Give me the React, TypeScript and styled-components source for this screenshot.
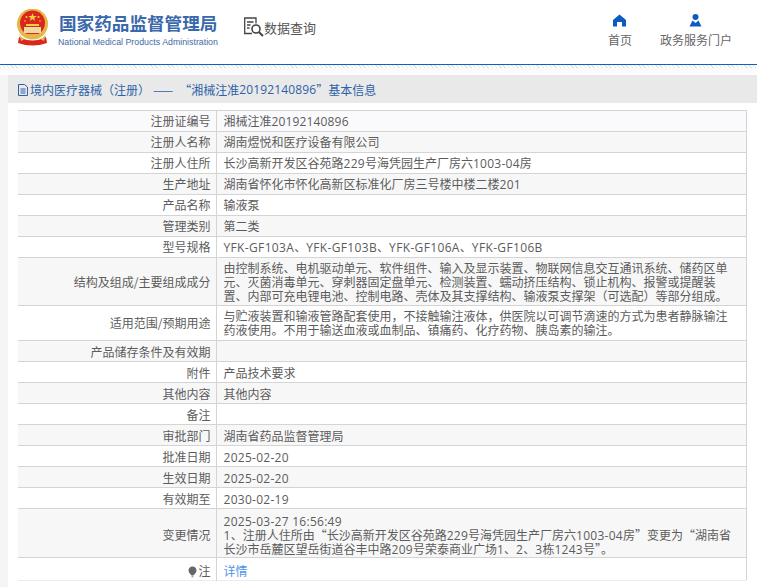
import { FC, ReactNode } from "react";
import styled, { createGlobalStyle } from "styled-components";

const GlobalStyle = createGlobalStyle`
  html, body {
    margin: 0;
    padding: 0;
    background: #f5f5f5;
    font-family: "Noto Sans CJK SC", sans-serif;
    font-size: 12px;
    color: #5c5c5c;
    overflow: hidden;
  }
`;

const Page = styled.div`
  width: 757px;
  height: 587px;
  overflow: hidden;
`;

const Header = styled.header`
  height: 64px;
  background: #fff;
  border-bottom: 1px solid #0a62c4;
  display: flex;
  align-items: flex-start;
`;

const Brand = styled.div`
  display: flex;
  align-items: flex-start;
  padding: 9px 0 0 16px;
`;

const BrandText = styled.div`
  margin-left: 10px;
  display: flex;
  flex-direction: column;
`;

const BrandName = styled.div`
  font-size: 17.6px;
  line-height: 22px;
  margin-top: 3px;
  font-weight: 700;
  color: #3a68ac;
  white-space: nowrap;
`;

const BrandEnglish = styled.div`
  font-family: "Liberation Sans", sans-serif;
  font-size: 8.8px;
  line-height: 11px;
  margin: 3px 0 0 -1px;
  color: #3f6aa8;
  white-space: nowrap;
`;

const Query = styled.div`
  display: flex;
  align-items: center;
  margin: 17px 0 0 26px;
  font-size: 13px;
  line-height: 20px;
  color: #555;
  white-space: nowrap;
`;

const Nav = styled.nav`
  margin-left: auto;
  display: flex;
  padding: 14px 25px 0 0;
  gap: 28px;
`;

const NavItem = styled.a`
  display: flex;
  flex-direction: column;
  align-items: center;
  color: #666;
  font-size: 12px;
  line-height: 16px;
  gap: 5px;
`;

const Stripe = styled.div`
  height: 10px;
  background:
    repeating-linear-gradient(45deg, #e4e4e4 0 1px, #fff 1px 3px) top / 100% 3px no-repeat,
    linear-gradient(#f6f6f6, #fff);
`;

const Panel = styled.main`
  margin-left: 8px;
  background: #fff;
  height: 600px;
`;

const PanelTitle = styled.h2`
  margin: 0;
  height: 28px;
  background: #e9e9e9;
  display: flex;
  align-items: center;
  padding: 1px 0 0 10px;
  box-sizing: border-box;
  font-size: 12px;
  font-weight: 400;
  color: #2d62a8;
  white-space: nowrap;
`;

const Dash = styled.span`
  margin: 0 5px 0 3px;
  letter-spacing: 1px;
`;

const TableWrap = styled.div`
  padding: 7px 10px 0 10px;
`;

const Table = styled.table`
  width: 729px;
  border-collapse: collapse;
  table-layout: fixed;
  border-top: 1px solid #d4d4d4;
  border-right: 1px solid #d4d4d4;
`;

const Row = styled.tr<{ $tone: string; $pad: number }>`
  background: ${(p) => p.$tone};
  border-bottom: 1px solid #d4d4d4;

  td {
    padding-top: ${(p) => p.$pad}px;
  }

  &:last-child {
    border-bottom-color: #ececec;
  }
`;

const Label = styled.td`
  padding: 0 5px 0 0;
  text-align: right;
  border-right: 1px solid #d4d4d4;
  line-height: 18px;
  white-space: nowrap;
`;

const Value = styled.td`
  padding: 0 8px 0 7px;
  line-height: 14px;
`;

const Latin = styled.span<{ $spacing: number }>`
  font-family: "Open Sans", sans-serif;
  letter-spacing: ${(p) => p.$spacing}px;
  line-height: 1;
`;

const DetailLink = styled.a`
  color: #4f93e8;
`;

const Bulb = styled.svg`
  vertical-align: -2px;
  margin-right: 1px;
`;

// latin runs go through Open Sans, the rest stays on the CJK font
const Mixed: FC<{ text: string; spacing?: number }> = ({ text, spacing = 0.27 }) => (
  <>
    {text.split(/([A-Za-z0-9:\- ]+)/).map((part, i) =>
      i % 2 ? (
        <Latin key={i} $spacing={spacing}>
          {part}
        </Latin>
      ) : (
        part
      )
    )}
  </>
);

const Emblem: FC = () => (
  <svg width="33" height="37" viewBox="0 0 33 37">
    <circle cx="16.5" cy="15" r="15.5" fill="#e5b64a" />
    <circle cx="16.5" cy="14" r="12.5" fill="#d9271c" />
    <polygon points="16.5,4 17.6,7 20.8,7 18.2,8.9 19.2,12 16.5,10.1 13.8,12 14.8,8.9 12.2,7 15.4,7" fill="#f4d03f" />
    <circle cx="10.5" cy="8" r="1" fill="#f4d03f" />
    <circle cx="22.5" cy="8" r="1" fill="#f4d03f" />
    <circle cx="9" cy="12" r="0.8" fill="#f4d03f" />
    <circle cx="24" cy="12" r="0.8" fill="#f4d03f" />
    <rect x="10" y="15" width="13" height="2" fill="#f4d03f" />
    <rect x="8" y="18" width="17" height="6" fill="#f0d9a0" />
    <path d="M6 25 H27 V27 H6 Z" fill="#e5b64a" />
    <path d="M3 28 Q16.5 35 30 28 L31 34 Q16.5 39 2 34 Z" fill="#d9271c" />
    <path d="M3 24 Q5 29 9 30 L5 32 Z M30 24 Q28 29 24 30 L28 32 Z" fill="#e5b64a" />
  </svg>
);

const SearchDocIcon: FC = () => (
  <svg width="20" height="21" viewBox="0 0 20 21" fill="none" stroke="#444" strokeWidth="1.3">
    <path d="M8 16.5H.7V1H12V6.5" />
    <path d="M3 5h6.5M3 8h3.5M3 11h2.5" />
    <circle cx="12" cy="12" r="4" strokeWidth="1.6" />
    <path d="M15 15.2L19 19" strokeWidth="2" />
  </svg>
);

const DocIcon: FC = () => (
  <svg width="10" height="12" viewBox="0 0 10 12" fill="none" stroke="#2d62a8" strokeWidth="1" style={{ marginRight: 2 }}>
    <path d="M.5 .5H6.5L9.5 3V11.5H.5Z" />
    <path d="M2.5 5h5M2.5 7h5M2.5 9h5" />
  </svg>
);

const HomeIcon: FC = () => (
  <svg width="13" height="13" viewBox="0 0 13 13" fill="#0a5cc2">
    <path d="M6.5 .5L13 6V12.5H9V8H4V12.5H0V6Z" />
  </svg>
);

const UserIcon: FC = () => (
  <svg width="13" height="13" viewBox="0 0 13 13" fill="#0a5cc2">
    <circle cx="6.5" cy="3" r="3" />
    <path d="M3.5 6.5L6.5 9L9.5 6.5L12.5 12.5H.5Z" />
  </svg>
);

const WHITE = "#fff";
const GREY = "#f7f7f7";

const rows: { label: ReactNode; value: ReactNode; height: number; tone: string; pad?: number }[] = [
  { label: "注册证编号", value: <Mixed text="湘械注准20192140896" spacing={0.15} />, height: 20, tone: "#fafafc" },
  { label: "注册人名称", value: "湖南煜悦和医疗设备有限公司", height: 20, tone: GREY },
  { label: "注册人住所", value: <Mixed text="长沙高新开发区谷苑路229号海凭园生产厂房六1003-04房" />, height: 20, tone: WHITE },
  { label: "生产地址", value: <Mixed text="湖南省怀化市怀化高新区标准化厂房三号楼中楼二楼201" />, height: 20, tone: GREY },
  { label: "产品名称", value: "输液泵", height: 20, tone: WHITE },
  { label: "管理类别", value: "第二类", height: 20, tone: GREY },
  { label: "型号规格", value: <Mixed text="YFK-GF103A、YFK-GF103B、YFK-GF106A、YFK-GF106B" spacing={0.35} />, height: 20, tone: WHITE },
  {
    label: "结构及组成/主要组成成分",
    value:
      "由控制系统、电机驱动单元、软件组件、输入及显示装置、物联网信息交互通讯系统、储药区单元、灭菌消毒单元、穿刺器固定盘单元、检测装置、蠕动挤压结构、锁止机构、报警或提醒装置、内部可充电锂电池、控制电路、壳体及其支撑结构、输液泵支撑架（可选配）等部分组成。",
    height: 47,
    tone: GREY,
  },
  {
    label: "适用范围/预期用途",
    value:
      "与贮液装置和输液管路配套使用，不接触输注液体，供医院以可调节滴速的方式为患者静脉输注药液使用。不用于输送血液或血制品、镇痛药、化疗药物、胰岛素的输注。",
    height: 34,
    tone: WHITE,
  },
  { label: "产品储存条件及有效期", value: "", height: 20, tone: GREY, pad: 2 },
  { label: "附件", value: "产品技术要求", height: 20, tone: WHITE, pad: 2 },
  { label: "其他内容", value: "其他内容", height: 20, tone: GREY, pad: 2 },
  { label: "备注", value: "", height: 20, tone: WHITE, pad: 2 },
  { label: "审批部门", value: "湖南省药品监督管理局", height: 20, tone: GREY, pad: 2 },
  { label: "批准日期", value: <Mixed text="2025-02-20" />, height: 20, tone: WHITE, pad: 2 },
  { label: "生效日期", value: <Mixed text="2025-02-20" />, height: 20, tone: GREY, pad: 2 },
  { label: "有效期至", value: <Mixed text="2030-02-19" />, height: 20, tone: WHITE, pad: 2 },
  {
    label: "变更情况",
    value: (
      <>
        <Mixed text="2025-03-27 16:56:49" />
        <br />
        <Mixed text="1、注册人住所由“长沙高新开发区谷苑路229号海凭园生产厂房六1003-04房”变更为“湖南省长沙市岳麓区望岳街道谷丰中路209号荣泰商业广场1、2、3栋1243号”。" />
      </>
    ),
    height: 48,
    tone: GREY,
    pad: 4,
  },
  {
    label: (
      <>
        <Bulb width="9" height="12" viewBox="0 0 9 12">
          <path d="M4.5 .5C7 .5 8.5 2.3 8.5 4.5C8.5 7 6 8 5.5 9.5H3.5C3 8 .5 7 .5 4.5C.5 2.3 2 .5 4.5 .5Z" fill="#666" />
          <rect x="3.5" y="10" width="2" height="1.5" fill="#aaa" />
        </Bulb>
        注
      </>
    ),
    value: <DetailLink>详情</DetailLink>,
    height: 22,
    tone: WHITE,
    pad: 3,
  },
];

export default function App() {
  return (
    <Page>
      <GlobalStyle />
      <Header>
        <Brand>
          <Emblem />
          <BrandText>
            <BrandName>国家药品监督管理局</BrandName>
            <BrandEnglish>National Medical Products Administration</BrandEnglish>
          </BrandText>
        </Brand>
        <Query>
          <SearchDocIcon />
          数据查询
        </Query>
        <Nav>
          <NavItem>
            <HomeIcon />
            首页
          </NavItem>
          <NavItem>
            <UserIcon />
            政务服务门户
          </NavItem>
        </Nav>
      </Header>
      <Stripe />
      <Panel>
        <PanelTitle>
          <DocIcon />
          境内医疗器械（注册）
          <Dash>——</Dash>
          <Mixed text="“湘械注准20192140896”" spacing={0.15} />
          基本信息
        </PanelTitle>
        <TableWrap>
          <Table>
            <colgroup>
              <col style={{ width: 198 }} />
              <col />
            </colgroup>
            <tbody>
              {rows.map((r, i) => (
                <Row key={i} $tone={r.tone} $pad={r.pad ?? 0} style={{ height: r.height + 1 }}>
                  <Label>{r.label}</Label>
                  <Value>{r.value}</Value>
                </Row>
              ))}
            </tbody>
          </Table>
        </TableWrap>
      </Panel>
    </Page>
  );
}
